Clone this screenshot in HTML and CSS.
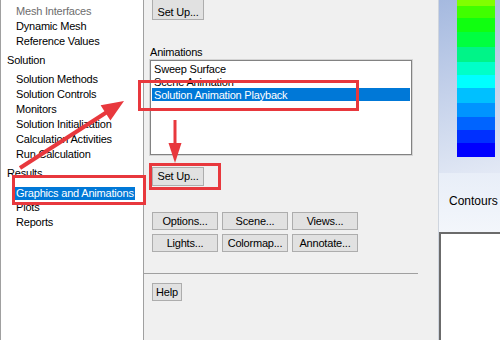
FILE: index.html
```html
<!DOCTYPE html>
<html lang="en">
<head>
	<meta charset="UTF-8">
	<title>Graphics and Animations</title>
	<link rel="stylesheet" href="styles.css">
</head>
<body>
	<div class="app">
		<!-- tree -->
		<div class="tree">
			<ul class="nodes">
				<li class="leaf muted">Mesh Interfaces</li>
				<li class="leaf">Dynamic Mesh</li>
				<li class="leaf">Reference Values</li>
				<li class="group">Solution</li>
				<li class="leaf">Solution Methods</li>
				<li class="leaf">Solution Controls</li>
				<li class="leaf">Monitors</li>
				<li class="leaf">Solution Initialization</li>
				<li class="leaf">Calculation Activities</li>
				<li class="leaf">Run Calculation</li>
				<li class="group">Results</li>
				<li class="leaf"><span class="selected">Graphics and Animations</span></li>
				<li class="leaf">Plots</li>
				<li class="leaf">Reports</li>
			</ul>
		</div>

		<!-- task page -->
		<div class="task">
			<button class="btn setup first">Set Up...</button>
			<div class="label">Animations</div>
			<div class="listbox">
				<div class="item">Sweep Surface</div>
				<div class="item">Scene Animation</div>
				<div class="item current">Solution Animation Playback</div>
			</div>
			<button class="btn setup">Set Up...</button>
			<div class="grid">
				<button class="btn">Options...</button>
				<button class="btn">Scene...</button>
				<button class="btn">Views...</button>
				<button class="btn">Lights...</button>
				<button class="btn">Colormap...</button>
				<button class="btn">Annotate...</button>
			</div>
			<div class="sep"></div>
			<button class="btn help">Help</button>
		</div>

		<!-- graphics window -->
		<div class="graphics">
			<div class="view">
				<div class="colormap"></div>
			</div>
			<div class="caption">Contours</div>
			<div class="canvas"></div>
		</div>

		<!-- red marks -->
		<svg class="marks" width="500" height="340" viewBox="0 0 500 340">
			<g fill="none" stroke="#e8383d" stroke-width="3">
				<rect x="13.5" y="176.5" width="131" height="27"/>
				<rect x="139.5" y="81.5" width="218" height="28"/>
				<rect x="150.5" y="164.5" width="69" height="24"/>
			</g>
			<line x1="20" y1="168" x2="107" y2="112" stroke="#e8383d" stroke-width="4"/>
			<polygon points="124,101 110.4,120.5 100.6,105.3" fill="#e8383d"/>
			<line x1="175" y1="120" x2="175" y2="146" stroke="#e8383d" stroke-width="3"/>
			<polygon points="168.5,143 181.5,143 175,163" fill="#e8383d"/>
		</svg>
	</div>
</body>
</html>
```

FILE: styles.css
```css
* {
	margin: 0;
	padding: 0;
	box-sizing: border-box;
}
body {
	width: 500px;
	height: 340px;
	overflow: hidden;
	font: 11px "Liberation Sans", Arial, sans-serif;
	letter-spacing: -0.2px;
	color: #000;
	background: #f0f0f0;
}
.app {
	position: relative;
	display: flex;
	height: 340px;
}

/* tree */
.tree {
	width: 144px;
	flex: none;
	background: #fff;
	border-left: 1px solid #a0a0a0;
	border-right: 1px solid #a0a0a0;
	padding-top: 4px;
}
.nodes {
	list-style: none;
}
.nodes li {
	height: 15px;
	line-height: 15px;
	white-space: nowrap;
}
.leaf {
	padding-left: 15px;
}
.group {
	padding-left: 6px;
	margin: 4px 0;
}
.muted {
	color: #6d6d6d;
}
.selected {
	display: inline-block;
	line-height: 13px;
	padding: 0 1px;
	margin-left: -1px;
	background: #0078d7;
	color: #fff;
	vertical-align: middle;
}

/* task page */
.task {
	width: 294px;
	flex: none;
	padding-left: 8px;
	display: flex;
	flex-direction: column;
	align-items: flex-start;
}
.btn {
	font: inherit;
	letter-spacing: inherit;
	color: #000;
	background: #e1e1e1;
	border: 1px solid #adadad;
	height: 18px;
	line-height: 16px;
	text-align: center;
}
.setup {
	width: 52px;
	height: 19px;
	line-height: 17px;
}
.setup.first {
	margin-top: -4px;
	height: 24px;
	padding-top: 8px;
	line-height: 14px;
}
.setup:not(.first) {
	margin-top: 12px;
}
.label {
	margin: 25px 0 0 -2px;
	line-height: 14px;
}
.listbox {
	margin: 1px 0 0 -2px;
	width: 262px;
	height: 95px;
	padding: 1px;
	background: #fff;
	border: 1px solid #828282;
	outline: 1px solid #d4d4d4;
}
.item {
	height: 13px;
	line-height: 14px;
	padding-left: 2px;
	white-space: nowrap;
}
.item.current {
	background: #0078d7;
	color: #fff;
}
.grid {
	margin-top: 26px;
	display: grid;
	grid-template-columns: repeat(3, 66px);
	gap: 4px;
}
.sep {
	margin: 21px 0 0 -8px;
	width: 274px;
	border-top: 1px solid #a0a0a0;
}
.help {
	margin-top: 9px;
	width: 30px;
}

/* graphics window */
.graphics {
	flex: 1;
	display: flex;
	flex-direction: column;
	border-left: 1px solid #cfd5de;
	overflow: hidden;
}
.view {
	height: 173px;
	padding-left: 18px;
	background: linear-gradient(165deg, #a5b9df, #e3e9f5);
}
.colormap {
	width: 38px;
	height: 157px;
	background: linear-gradient(to bottom,
		#80ff00 0 6px, #40ff00 6px 18px, #10ff10 18px 32px, #00ff40 32px 47px,
		#00f488 47px 62px, #00ffc8 62px 75px, #00ffff 75px 88px, #00c0ff 88px 103px,
		#0094ff 103px 117px, #0064ff 117px 130px, #0030ff 130px 143px, #0000ff 143px 157px);
}
.caption {
	height: 59px;
	padding: 21px 0 0 10px;
	font-size: 12px;
	line-height: 14px;
	letter-spacing: 0;
	white-space: nowrap;
	background: linear-gradient(#e8eef8, #f3f6fb);
}
.canvas {
	flex: 1;
	background: #fff;
	border-top: 2px solid #6b6b6b;
	border-left: 2px solid #6b6b6b;
}

/* annotation overlay */
.marks {
	position: absolute;
	top: 0;
	left: 0;
	pointer-events: none;
}
```
